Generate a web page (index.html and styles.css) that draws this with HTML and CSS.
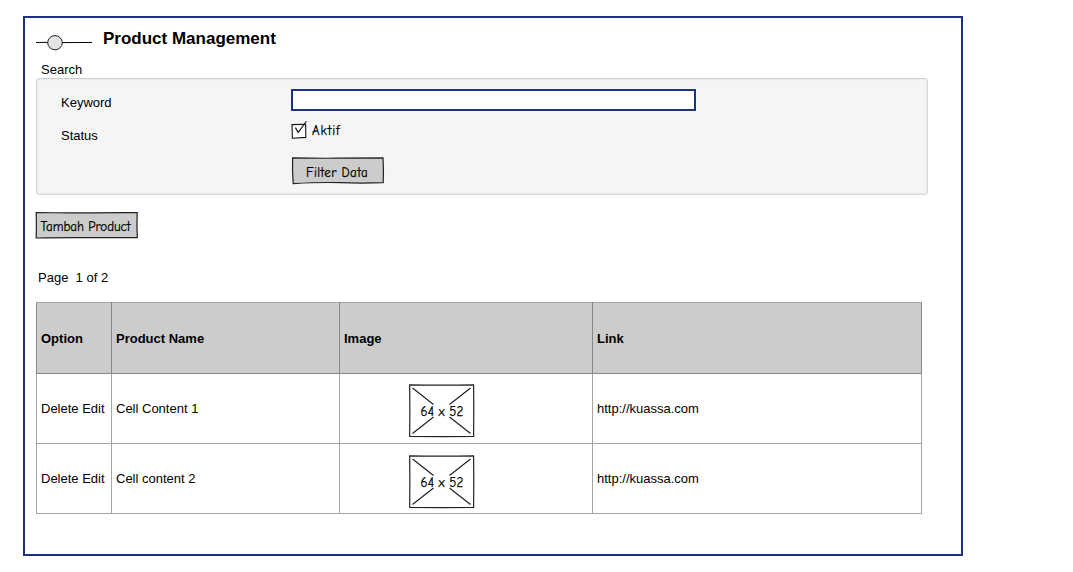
FILE: index.html
```html
<!DOCTYPE html>
<html lang="id">
<head>
<meta charset="utf-8">
<title>Product Management</title>
<link rel="stylesheet" href="styles.css">
</head>
<body>
<main class="frame">
  <header class="head">
    <svg class="slider" width="56" height="17" viewBox="0 0 56 17" fill="none" stroke="#000">
      <path d="M0 7.5L8 7.4L20 7.6L56 7.5"/>
      <ellipse cx="19" cy="7.7" rx="7.3" ry="7.1" fill="#e4e4e4" stroke="#222"/>
    </svg>
    <h1 class="title">Product Management</h1>
  </header>
  <div class="search-label">Search</div>
  <form class="panel">
    <label class="label" for="kw">Keyword</label>
    <input class="keyword" id="kw" type="text">
    <div class="label label-status">Status</div>
    <div class="check">
      <svg width="18" height="20" viewBox="0 0 18 20" fill="none" stroke="#111" stroke-width="1.1">
        <path fill="#fff" d="M1 4.6L14.6 4.2L14.8 17.4L1.4 18.2Z"/>
        <path d="M4.4 7.6L7.2 12.4L15.4 1.2"/>
      </svg>
      <span class="hand aktif">Aktif</span>
    </div>
    <button class="sketch filter" type="button">
      <svg class="outline" width="94" height="29" viewBox="0 0 94 29" fill="#ccc" stroke="#222" stroke-width="1.2">
        <path d="M1.6 .8Q25 1.4 46 1.2T92 .9Q92.8 14 92.2 25.7Q70 26.4 50 25.7T2.2 26.6Q1.2 14 1.6 .8Z"/>
      </svg>
      <span class="hand filter-text">Filter Data</span>
    </button>
  </form>
  <button class="sketch add" type="button">
    <svg class="outline" width="104" height="29" viewBox="0 0 104 29" fill="#ccc" stroke="#222" stroke-width="1.2">
      <path d="M1.2 1.5Q28 2.1 50 1.8T102.2 1.6Q101.6 14 102.3 26.6Q70 26.8 50 26.6T1.2 27Q1.6 14 1.2 1.5Z"/>
    </svg>
    <span class="hand add-text">Tambah Product</span>
  </button>
  <div class="page">Page&nbsp; 1 of 2</div>
  <table class="grid">
    <colgroup><col class="c1"><col class="c2"><col class="c3"><col class="c4"></colgroup>
    <thead>
      <tr><th>Option</th><th>Product Name</th><th>Image</th><th>Link</th></tr>
    </thead>
    <tbody>
      <tr>
        <td>Delete Edit</td><td>Cell Content 1</td>
        <td class="image-cell"><div class="image">
          <svg width="67" height="54" viewBox="0 0 67 54" fill="none" stroke="#222" stroke-width="1.2">
            <path d="M1.7 .9Q33 1.3 65.6 .9Q66 28 65.6 52.5Q34 52.8 1.7 52.5Q2 28 1.7 .9ZM4.5 4L25.5 20.5M62.5 4L41.5 20.5M4.5 49.5L25.5 33M62.5 49.5L41.5 33"/>
          </svg>
          <span class="hand size">64 x 52</span>
        </div></td>
        <td>http://kuassa.com</td>
      </tr>
      <tr>
        <td>Delete Edit</td><td>Cell content 2</td>
        <td class="image-cell"><div class="image image-low">
          <svg width="67" height="54" viewBox="0 0 67 54" fill="none" stroke="#222" stroke-width="1.2">
            <path d="M1.7 .9Q33 1.3 65.6 .9Q66 28 65.6 52.5Q34 52.8 1.7 52.5Q2 28 1.7 .9ZM4.5 4L25.5 20.5M62.5 4L41.5 20.5M4.5 49.5L25.5 33M62.5 49.5L41.5 33"/>
          </svg>
          <span class="hand size">64 x 52</span>
        </div></td>
        <td>http://kuassa.com</td>
      </tr>
    </tbody>
  </table>
</main>
</body>
</html>
```
FILE: styles.css
```css
* { box-sizing: border-box; }
body {
  margin: 0;
  padding: 16px 0 0 23px;
  background: #fff;
  color: #000;
  font: 13px/18px "Liberation Sans", Arial, sans-serif;
}
.frame {
  display: flex;
  flex-direction: column;
  align-items: flex-start;
  width: 940px;
  height: 540px;
  padding-left: 11px;
  border: 2px solid #1b3281;
}
.head { display: flex; gap: 11px; height: 42px; }
.slider { margin-top: 17px; }
.title { margin: 11px 0 0; font-size: 17px; line-height: 20px; }
.search-label { height: 18px; padding: 1px 0 0 5px; }
.panel {
  display: grid;
  grid-template-columns: 230px 405px;
  grid-template-rows: 31px 37px 29px;
  width: 892px;
  height: 117px;
  padding: 10px 0 0 24px;
  border: 1px solid #d8d8d8;
  border-top-color: #ccc;
  border-radius: 4px;
  background: #f5f5f5;
  box-shadow: inset 0 0 1px 1px #ececec;
}
.label { padding-top: 5px; }
.label-status { padding-top: 7px; }
.keyword {
  width: 405px;
  height: 22px;
  margin: 0;
  padding: 0 4px;
  border: 2px solid #1b3281;
  border-radius: 0;
  background: #fff;
}
.check { display: flex; gap: 2px; }
.hand {
  font-family: "Comic Sans MS", "Comic Neue", Lato, sans-serif;
  font-size: 13px;
  line-height: 18px;
  white-space: nowrap;
  -webkit-text-stroke: .25px #000;
}
.aktif { padding: 2px 0 0 1px; letter-spacing: .9px; }
.sketch {
  display: grid;
  place-items: center;
  margin: 0;
  padding: 0;
  border: 0;
  background: none;
  color: #000;
}
.sketch > * { grid-area: 1 / 1; }
.filter { grid-column: 2; width: 94px; height: 29px; }
.add { width: 104px; height: 29px; margin: 16px 0 0 -1px; }
.filter-text { padding: 2px 2px 0 0; letter-spacing: .4px; }
.add-text { padding: 3px 3px 0 0; letter-spacing: -.05px; }
.page { height: 18px; margin: 29px 0 15px; padding-left: 2px; }
.grid {
  width: 886px;
  border-collapse: collapse;
  table-layout: fixed;
}
.c1 { width: 75px; }
.c2 { width: 228px; }
.c3 { width: 253px; }
.c4 { width: 329px; }
.grid th, .grid td {
  height: 70px;
  padding: 0 0 0 4px;
  border: 1px solid #a5a5a5;
  text-align: left;
  white-space: nowrap;
}
.grid th {
  height: 71px;
  padding-top: 2px;
  background: #ccc;
  border-color: #888;
  border-top-color: #a5a5a5;
}
.grid .image-cell { padding: 4px 0 0 68px; }
.image { display: grid; place-items: center; width: 67px; height: 54px; }
.image > * { grid-area: 1 / 1; }
.image-low { margin-top: 2px; }
.size { padding: 3px 0 0 1px; letter-spacing: .15px; }
```
